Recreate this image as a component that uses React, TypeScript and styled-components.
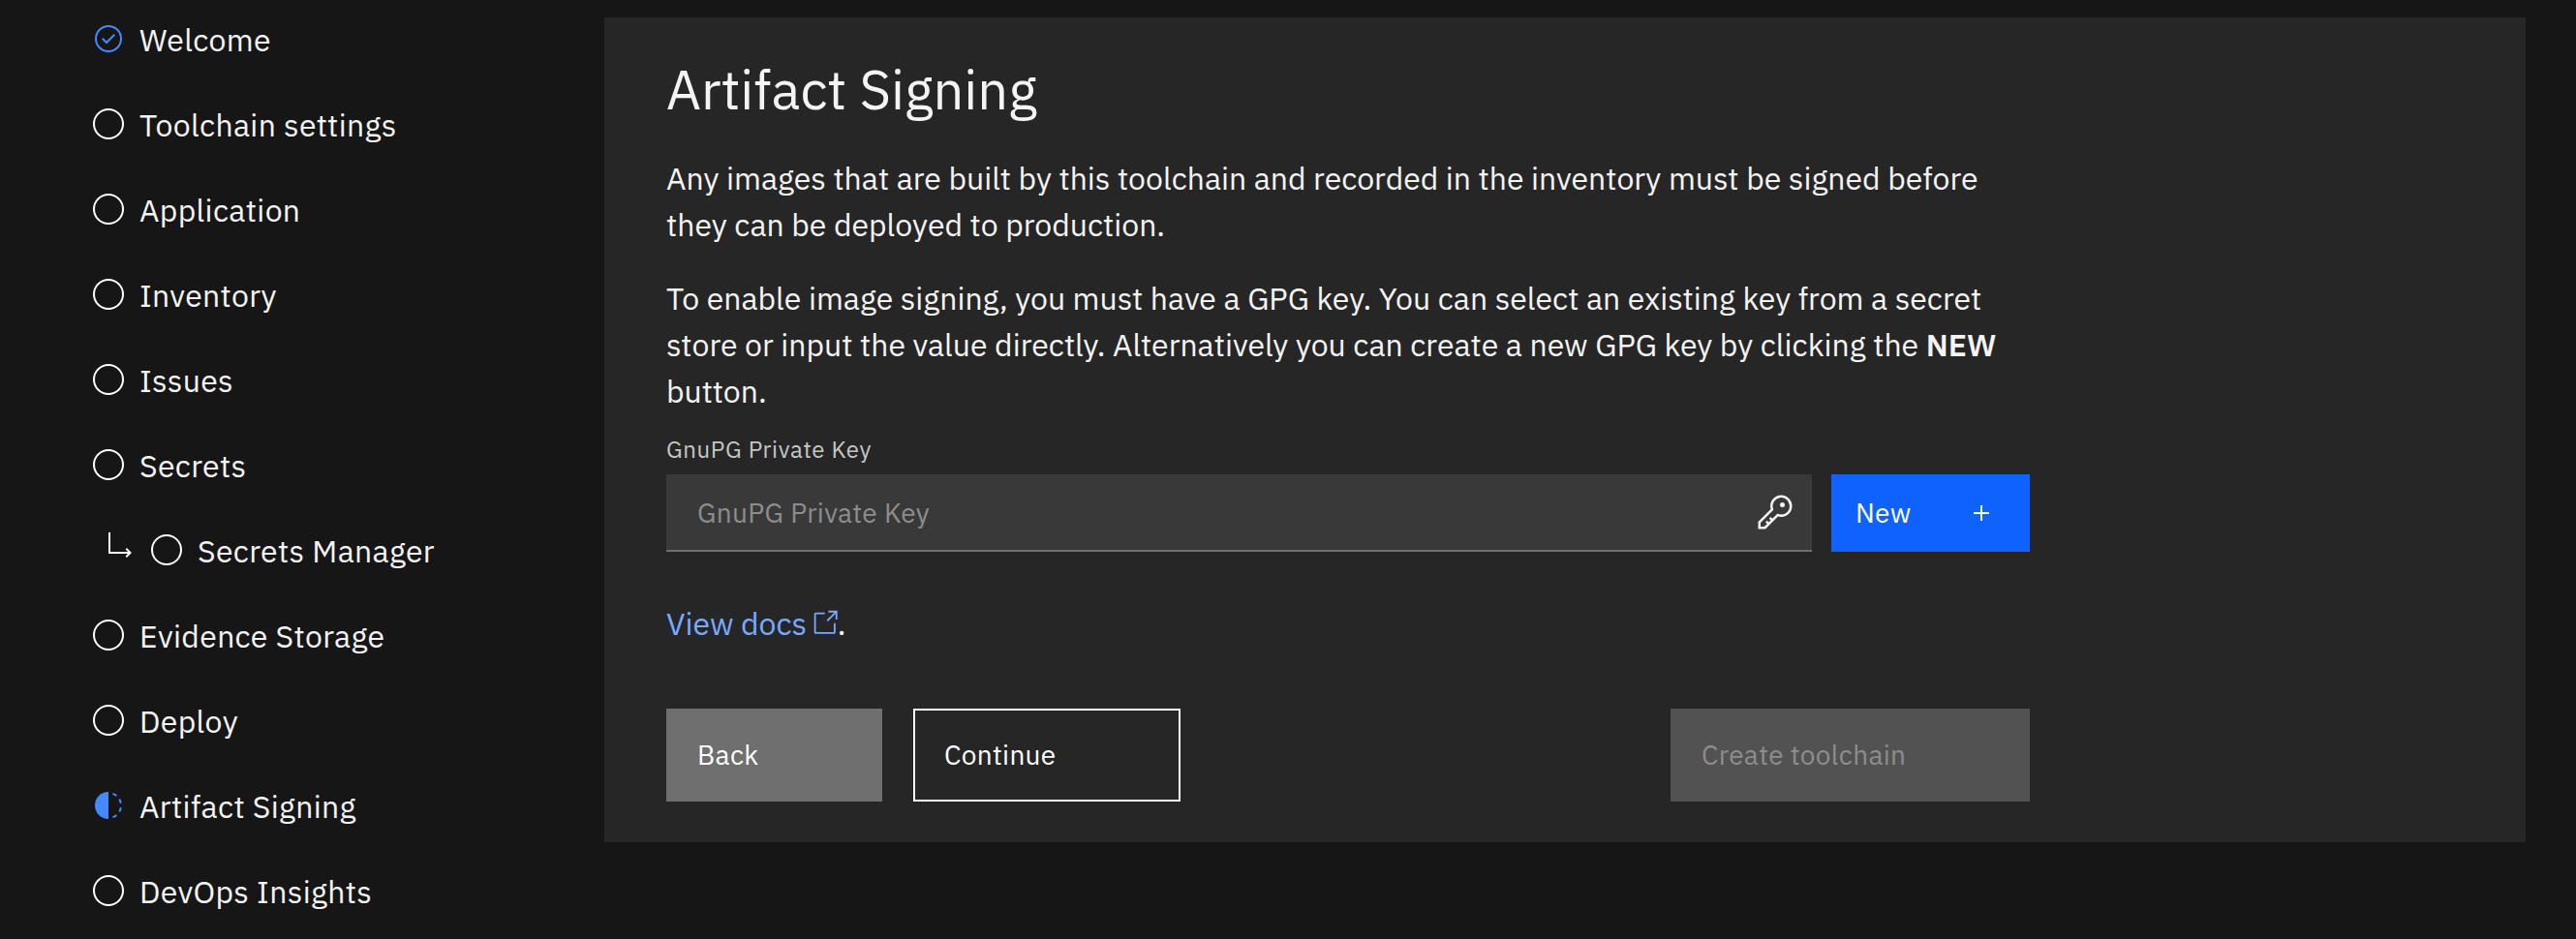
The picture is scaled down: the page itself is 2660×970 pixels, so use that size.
import React from "react";
import styled, { createGlobalStyle, css } from "styled-components";

const GlobalStyle = createGlobalStyle`
  * { box-sizing: border-box; }
  body {
    margin: 0;
    background: #161616;
    color: #f4f4f4;
    font-family: "IBM Plex Sans", Roboto, "Liberation Sans", sans-serif;
    font-size: 32px;
  }
`;

const Page = styled.div`
  display: flex;
  align-items: flex-start;
  width: 2660px;
  height: 970px;
  overflow: hidden;
`;

const Steps = styled.ul`
  display: flex;
  flex-direction: column;
  gap: 8px;
  width: 624px;
  flex: none;
  margin: 0;
  padding: 0 0 0 96px;
  list-style: none;
`;

const Step = styled.li<{ $nested?: boolean }>`
  display: flex;
  align-items: center;
  height: 80px;
  padding-left: ${(p) => (p.$nested ? 16 : 0)}px;
`;

const StepIcon = styled.svg`
  width: 32px;
  height: 32px;
  flex: none;
`;

const NestedArrow = styled.svg`
  width: 24px;
  height: 36px;
  margin-right: 20px;
  flex: none;
`;

const StepLabel = styled.span`
  margin: 2px 0 0 16px;
  line-height: 40px;
  white-space: nowrap;
  letter-spacing: 0.32px;
`;

const Panel = styled.main`
  width: 1984px;
  height: 852px;
  margin-top: 18px;
  padding: 42px 64px;
  background: #262626;
`;

const Content = styled.div`
  display: flex;
  flex-direction: column;
  width: 1408px;
`;

const Title = styled.h1`
  margin: 0 0 36px;
  font-size: 56px;
  font-weight: 400;
  line-height: 64px;
`;

const Paragraph = styled.p<{ $gap: number }>`
  margin: 0 0 ${(p) => p.$gap}px;
  line-height: 48px;
`;

const Line = styled.span`
  display: block;
  white-space: nowrap;
`;

const Strong = styled.strong`
  font-weight: 600;
`;

const FieldLabel = styled.label`
  margin-bottom: 10px;
  color: #c6c6c6;
  font-size: 24px;
  line-height: 32px;
  letter-spacing: 0.64px;
`;

const FieldRow = styled.div`
  display: flex;
  gap: 20px;
  height: 80px;
  margin-bottom: 50px;
`;

const Field = styled.div`
  display: flex;
  align-items: center;
  width: 1183px;
  padding: 0 18px 0 32px;
  background: #393939;
  border-bottom: 2px solid #6f6f6f;
`;

const Input = styled.input`
  flex: 1;
  height: 100%;
  padding: 0;
  border: 0;
  outline: 0;
  background: transparent;
  color: #f4f4f4;
  font: inherit;
  font-size: 28px;
  letter-spacing: 0.32px;
  &::placeholder {
    color: #8d8d8d;
    opacity: 1;
  }
`;

const KeyIcon = styled.svg`
  width: 40px;
  height: 40px;
  fill: #f4f4f4;
`;

type Variant = "primary" | "secondary" | "outline" | "disabled";

const variants = {
  primary: css`
    background: #0f62fe;
    border-color: #0f62fe;
  `,
  secondary: css`
    background: #6f6f6f;
    border-color: #6f6f6f;
  `,
  outline: css`
    background: transparent;
    border-color: #ffffff;
  `,
  disabled: css`
    background: #525252;
    border-color: #525252;
    color: #8d8d8d;
  `,
};

const Button = styled.button<{
  $variant: Variant;
  $width: number;
  $inset?: number;
}>`
  display: flex;
  align-items: center;
  justify-content: space-between;
  width: ${(p) => p.$width}px;
  padding: 0 ${(p) => (p.$inset ?? 32) - 2}px 1px;
  border: 2px solid;
  border-radius: 0;
  color: #ffffff;
  font-family: inherit;
  font-size: 28px;
  line-height: 36px;
  letter-spacing: 0.32px;
  ${(p) => variants[p.$variant]}
`;

const PlusIcon = styled.svg`
  width: 16px;
  height: 16px;
  margin: 1px 17px 0 0;
`;

const Docs = styled.div`
  display: flex;
  height: 48px;
  margin-bottom: 64px;
  line-height: 48px;
`;

const DocsLink = styled.a`
  display: flex;
  color: #78a9ff;
`;

const LaunchIcon = styled.svg`
  width: 29.5px;
  height: 29.5px;
  margin: 9px -2px 0 4px;
  fill: currentColor;
`;

const Actions = styled.div`
  display: flex;
  height: 96px;
  gap: 32px;
`;

const Spacer = styled.div`
  flex: 1;
`;

type Status = "done" | "current" | "todo";

const steps: { label: string; status?: Status; nested?: boolean }[] = [
  { label: "Welcome", status: "done" },
  { label: "Toolchain settings" },
  { label: "Application" },
  { label: "Inventory" },
  { label: "Issues" },
  { label: "Secrets" },
  { label: "Secrets Manager", nested: true },
  { label: "Evidence Storage" },
  { label: "Deploy" },
  { label: "Artifact Signing", status: "current" },
  { label: "DevOps Insights" },
];

function StatusIcon({ status }: { status: Status }) {
  if (status === "done") {
    return (
      <StepIcon viewBox="0 0 32 32">
        <circle cx="16" cy="16" r="13" fill="none" stroke="#4589ff" strokeWidth="2" />
        <path
          d="M14 21.414 9 16.413 10.413 15 14 18.586 21.585 11 23 12.415Z"
          fill="#4589ff"
        />
      </StepIcon>
    );
  }
  if (status === "current") {
    return (
      <StepIcon viewBox="0 0 32 32" fill="#4589ff">
        <path d="M23.7642,6.8593l1.2851-1.5315A13.976,13.976,0,0,0,20.8672,2.887l-.6836,1.8776A11.9729,11.9729,0,0,1,23.7642,6.8593Z" />
        <path d="M27.81,14l1.9677-.4128A13.8888,13.8888,0,0,0,28.14,9.0457L26.4087,10A12.52,12.52,0,0,1,27.81,14Z" />
        <path d="M20.1836,27.2354l.6836,1.8776a13.976,13.976,0,0,0,4.1821-2.4408l-1.2851-1.5315A11.9729,11.9729,0,0,1,20.1836,27.2354Z" />
        <path d="M26.4087,22l1.7313,1a14.14,14.14,0,0,0,1.6382-4.5872L27.81,18A12.52,12.52,0,0,1,26.4087,22Z" />
        <path d="M16,30V2a14,14,0,0,0,0,28Z" />
      </StepIcon>
    );
  }
  return (
    <StepIcon viewBox="0 0 32 32">
      <circle cx="16" cy="16" r="15" fill="none" stroke="#ffffff" strokeWidth="2" />
    </StepIcon>
  );
}

export default function App() {
  return (
    <Page>
      <GlobalStyle />
      <Steps>
        {steps.map((s) => (
          <Step key={s.label} $nested={s.nested}>
            {s.nested && (
              <NestedArrow viewBox="0 0 24 36" fill="none" stroke="#ffffff" strokeWidth="2">
                <path d="M1 0V21H22.5" />
                <path d="M18.3 16.8 22.5 21 18.3 25.2" />
              </NestedArrow>
            )}
            <StatusIcon status={s.status ?? "todo"} />
            <StepLabel>{s.label}</StepLabel>
          </Step>
        ))}
      </Steps>
      <Panel>
        <Content>
          <Title>Artifact Signing</Title>
          <Paragraph $gap={28}>
            <Line>
              Any images that are built by this toolchain and recorded in the inventory must be
              signed before
            </Line>
            <Line>they can be deployed to production.</Line>
          </Paragraph>
          <Paragraph $gap={20}>
            <Line>
              To enable image signing, you must have a GPG key. You can select an existing key from
              a secret
            </Line>
            <Line>
              store or input the value directly. Alternatively you can create a new GPG key by
              clicking the <Strong>NEW</Strong>
            </Line>
            <Line>button.</Line>
          </Paragraph>
          <FieldLabel htmlFor="gpg-key">GnuPG Private Key</FieldLabel>
          <FieldRow>
            <Field>
              <Input id="gpg-key" placeholder="GnuPG Private Key" />
              <KeyIcon viewBox="0 0 32 32">
                <path d="M21,2a8.9977,8.9977,0,0,0-8.6119,11.6118L2,24v6H8L18.3881,19.6118A9,9,0,1,0,21,2Zm0,16a7.0125,7.0125,0,0,1-2.0322-.3022L17.821,17.35l-.8472.8472-3.1811,3.1812L12.4141,20,11,21.4141l1.3787,1.3786-1.5859,1.586L9.4141,23,8,24.4141l1.3787,1.3786L7.1716,28H4V24.8284l9.8023-9.8023.8472-.8474-.3473-1.1467A7,7,0,1,1,21,18Z" />
                <circle cx="22" cy="10" r="2" />
              </KeyIcon>
            </Field>
            <Button $variant="primary" $width={205} $inset={25}>
              New
              <PlusIcon viewBox="0 0 16 16" stroke="#ffffff" strokeWidth="2">
                <path d="M8 0V16M0 8H16" />
              </PlusIcon>
            </Button>
          </FieldRow>
          <Docs>
            <DocsLink>
              View docs
              <LaunchIcon viewBox="0 0 16 16">
                <path d="M13,14H3c-0.6,0-1-0.4-1-1V3c0-0.6,0.4-1,1-1h5v1H3v10h10V8h1v5C14,13.6,13.6,14,13,14z" />
                <path d="M10,1V2H13.3L9,6.3 9.7,7 14,2.7V6H15V1Z" />
              </LaunchIcon>
            </DocsLink>
            .
          </Docs>
          <Actions>
            <Button $variant="secondary" $width={223}>
              Back
            </Button>
            <Button $variant="outline" $width={276}>
              Continue
            </Button>
            <Spacer />
            <Button $variant="disabled" $width={371} disabled>
              Create toolchain
            </Button>
          </Actions>
        </Content>
      </Panel>
    </Page>
  );
}
